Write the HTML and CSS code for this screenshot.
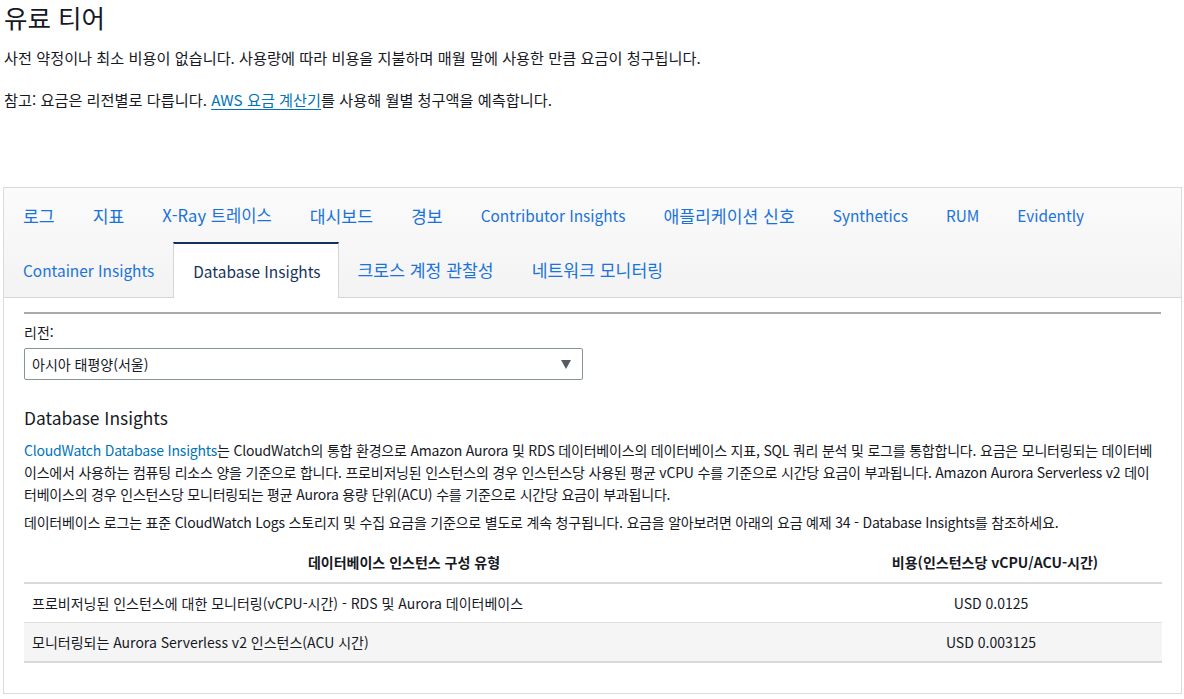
FILE: index.html
```html
<!DOCTYPE html>
<html lang="ko">
<head>
<meta charset="utf-8">
<link rel="stylesheet" href="styles.css">
</head>
<body>
<div class="page">
  <h1 class="title">유료 티어</h1>
  <p class="intro">사전 약정이나 최소 비용이 없습니다. 사용량에 따라 비용을 지불하며 매월 말에 사용한 만큼 요금이 청구됩니다.</p>
  <p class="note">참고: 요금은 리전별로 다릅니다. <a class="link" href="#">AWS 요금 계산기</a>를 사용해 월별 청구액을 예측합니다.</p>

  <div class="panel">
    <div class="tabs">
      <div class="tab-row">
        <span class="tab ko">로그</span>
        <span class="tab ko">지표</span>
        <span class="tab mix">X-Ray 트레이스</span>
        <span class="tab ko">대시보드</span>
        <span class="tab ko">경보</span>
        <span class="tab">Contributor Insights</span>
        <span class="tab ko">애플리케이션 신호</span>
        <span class="tab">Synthetics</span>
        <span class="tab">RUM</span>
        <span class="tab">Evidently</span>
      </div>
      <div class="tab-row">
        <span class="tab">Container Insights</span>
        <span class="tab active">Database Insights</span>
        <span class="tab ko">크로스 계정 관찰성</span>
        <span class="tab ko">네트워크 모니터링</span>
      </div>
    </div>
    <div class="content">
      <div class="rule"></div>
      <div class="label">리전:</div>
      <div class="select">
        <span>아시아 태평양(서울)</span>
        <span class="caret"></span>
      </div>
      <h2 class="heading">Database Insights</h2>
      <p class="body"><a class="link plain" href="#">CloudWatch Database Insights</a>는 CloudWatch의 통합 환경으로 Amazon Aurora 및 RDS 데이터베이스의 데이터베이스 지표, SQL 쿼리 분석 및 로그를 통합합니다. 요금은 모니터링되는 데이터베이스에서 사용하는 컴퓨팅 리소스 양을 기준으로 합니다. 프로비저닝된 인스턴스의 경우 인스턴스당 사용된 평균 vCPU 수를 기준으로 시간당 요금이 부과됩니다. Amazon Aurora Serverless v2 데이터베이스의 경우 인스턴스당 모니터링되는 평균 Aurora 용량 단위(ACU) 수를 기준으로 시간당 요금이 부과됩니다.</p>
      <p class="body">데이터베이스 로그는 표준 CloudWatch Logs 스토리지 및 수집 요금을 기준으로 별도로 계속 청구됩니다. 요금을 알아보려면 아래의 요금 예제 34 - Database Insights를 참조하세요.</p>
      <table class="price">
        <thead>
          <tr><th class="c1">데이터베이스 인스턴스 구성 유형</th><th class="c2">비용(인스턴스당 vCPU/ACU-시간)</th></tr>
        </thead>
        <tbody>
          <tr><td class="c1">프로비저닝된 인스턴스에 대한 모니터링(vCPU-시간) - RDS 및 Aurora 데이터베이스</td><td class="c2">USD 0.0125</td></tr>
          <tr class="alt"><td class="c1">모니터링되는 Aurora Serverless v2 인스턴스(ACU 시간)</td><td class="c2">USD 0.003125</td></tr>
        </tbody>
      </table>
    </div>
  </div>
</div>
</body>
</html>
```

FILE: styles.css
```css
html, body {
  margin: 0;
  padding: 0;
  background: #fff;
}
body {
  font-family: "Noto Sans CJK KR", "Noto Sans", sans-serif;
  color: #16191f;
}
.page {
  padding: 0 2px 0 3px;
}
.title {
  margin: 0;
  font-size: 25.5px;
  font-weight: 400;
  line-height: 34px;
  color: #16191f;
  padding-left: 1px;
}
.intro {
  margin: 13px 0 0 1px;
  font-size: 15.2px;
  line-height: 20px;
}
.note {
  margin: 22px 0 0 1px;
  font-size: 15.2px;
  line-height: 20px;
}
.link {
  color: #0073bb;
  text-decoration: underline;
  text-underline-offset: 3px;
}
.link.plain {
  text-decoration: none;
}
.panel {
  margin-top: 78px;
  border: 1px solid #dcdcdc;
  width: 1177px;
}
.tabs {
  background: linear-gradient(#fbfbfb, #f3f3f3);
  border-bottom: 1px solid #d6d6d6;
}
.tab-row {
  display: flex;
  height: 54px;
}
.tab-row + .tab-row {
  height: 55px;
}
.tab {
  display: flex;
  align-items: center;
  padding: 0 19px;
  font-size: 15.4px;
  color: #1a73d9;
  white-space: nowrap;
  box-sizing: border-box;
}
.tab.ko {
  font-size: 17.2px;
}
.tab.mix {
  font-size: 16.6px;
}
.tab.active {
  background: #fff;
  color: #16325c;
  border-top: 2px solid #16325c;
  border-left: 1px solid #d6d6d6;
  border-right: 1px solid #d6d6d6;
  margin-bottom: -1px;
  padding: 0 17px 0 19px;
}
.content {
  background: #fff;
  padding: 14px 20px 30px 20px;
}
.rule {
  height: 2px;
  background: #a9a9a9;
  margin-bottom: 8px;
}
.label {
  font-size: 14px;
  line-height: 20px;
}
.select {
  margin-top: 6px;
  width: 559px;
  height: 32px;
  box-sizing: border-box;
  border: 1px solid #879596;
  border-radius: 2px;
  display: flex;
  align-items: center;
  justify-content: space-between;
  padding: 0 11px 0 7px;
  font-size: 14px;
}
.caret {
  width: 0;
  height: 0;
  border-left: 5px solid transparent;
  border-right: 5px solid transparent;
  border-top: 9px solid #545b64;
}
.heading {
  margin: 25px 0 0 0;
  font-size: 17.4px;
  font-weight: 400;
  line-height: 26px;
}
.body {
  margin: 8px 0 0 0;
  font-size: 14px;
  line-height: 22px;
  letter-spacing: -0.2px;
}
.body + .body {
  margin-top: 6px;
}
.price {
  margin-top: 9px;
  width: 1138px;
  border-collapse: collapse;
  font-size: 14px;
}
.price th {
  font-weight: 700;
  height: 40px;
  border-bottom: 2px solid #d9d9d9;
  padding: 0;
}
.price td {
  height: 38px;
  border-bottom: 1px solid #e0e0e0;
  padding: 0 8px;
}
.price th.c1 {
  width: 760px;
  text-align: center;
}
.price td.c1 {
  width: 744px;
  text-align: left;
}
.price .c2 {
  text-align: center;
  padding-left: 44px;
}
.price tr.alt td {
  background: #f5f5f5;
  border-bottom: 2px solid #d9d9d9;
}
```
